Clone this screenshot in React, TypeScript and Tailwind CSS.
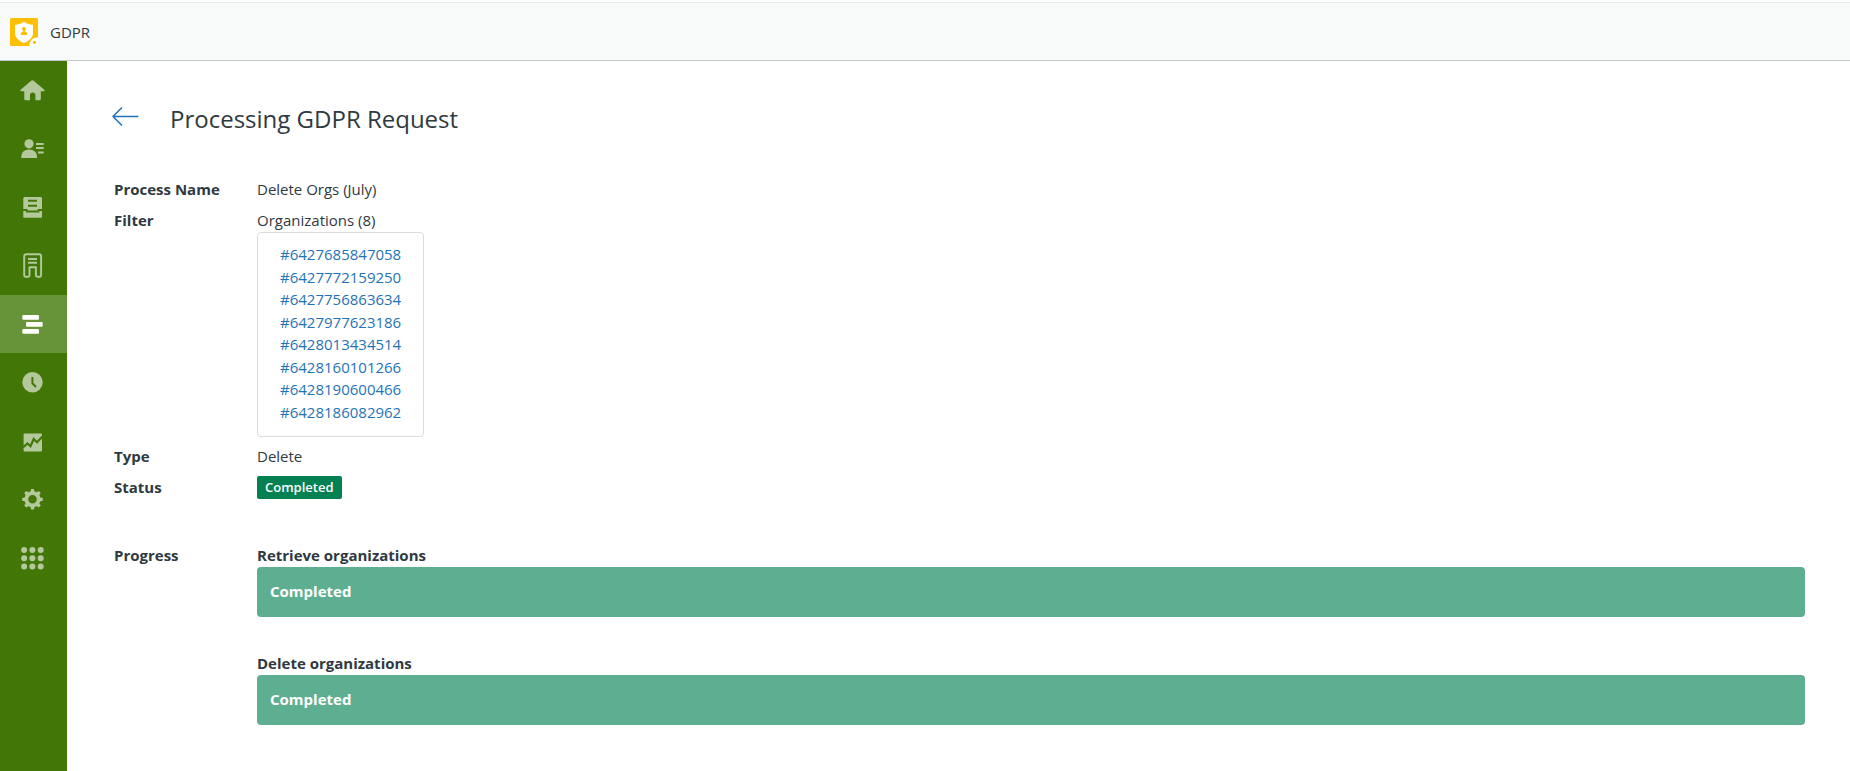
import type { ReactNode } from "react";
import clsx from "clsx";

const organizations = [
    "6427685847058",
    "6427772159250",
    "6427756863634",
    "6427977623186",
    "6428013434514",
    "6428160101266",
    "6428190600466",
    "6428186082962",
];

const progress = ["Retrieve organizations", "Delete organizations"];

const gearTeeth = [0, 45, 90, 135, 180, 225, 270, 315];
const dots = [5, 13.3, 21.6];

const navItems: { label: string; icon: ReactNode; active?: boolean }[] = [
    {
        label: "Home",
        icon: <path d="M11.5 3.6a1.4 1.4 0 0 1 1.8 0l11 9.2c.7.7.4 1.5-.5 1.5h-3v7.8c0 .7-.5 1.2-1.2 1.2h-4.2v-5a2.6 2.6 0 0 0-5.4 0v5H5.6c-.8 0-1.3-.5-1.3-1.2v-7.8H1.1c-.9 0-1.2-.8-.5-1.5z" />,
    },
    {
        label: "Customers",
        icon: (
            <>
                <circle cx="9" cy="7.8" r="4.6" />
                <path d="M1.3 22v-1c0-4.6 3-7.5 7.8-7.5s7.9 2.9 7.9 7.5v1z" />
                <path d="M16 7h7.7v2H16zM16 11h7.7v2H16zM18 15.5h5.7v2H18z" />
            </>
        ),
    },
    {
        label: "Views",
        icon: (
            <>
                <path fillRule="evenodd" d="M5 3h15.3c1 0 1.7.7 1.7 1.7V15h-4.3v1.6H7.6V15H3.3V4.7C3.3 3.7 4 3 5 3zm3 2.8v2h9v-2zm0 5v2h9v-2z" />
                <path d="M3.3 17h2.6v1.6h13.5V17H22v5.4c0 .8-.5 1.3-1.3 1.3H4.6c-.8 0-1.3-.5-1.3-1.3z" />
            </>
        ),
    },
    {
        label: "Organizations",
        icon: (
            <path
                d="M6.2 1.200h12.900a2 2 0 0 1 2 2v19.300a1.200 1.200 0 0 1-1.200 1.200h-2.800a1.200 1.200 0 0 1-1.200-1.200v-8.300h-6.400v8.300a1.200 1.200 0 0 1-1.200 1.200H5.400a1.200 1.200 0 0 1-1.200-1.200V3.200a2 2 0 0 1 2-2zM8 6h9M8 9.700h9"
                fill="none"
                stroke="currentColor"
                strokeWidth="1.9"
                strokeLinejoin="round"
            />
        ),
    },
    {
        label: "GDPR",
        active: true,
        icon: (
            <>
                <rect x="2.3" y="4" width="16.7" height="4.8" rx="1" />
                <rect x="6" y="11" width="16.7" height="4.8" rx="1" />
                <rect x="2.3" y="18" width="16.7" height="4.8" rx="1" />
            </>
        ),
    },
    {
        label: "Time",
        icon: (
            <>
                <circle cx="12.5" cy="13.2" r="10.2" />
                <path d="M12.4 8v6.3l3.6 3.7" fill="none" className="stroke-[#427707]" strokeWidth="2" />
            </>
        ),
    },
    {
        label: "Reporting",
        icon: (
            <>
                <rect x="3.6" y="5.4" width="18.4" height="18.2" rx="1" />
                <path d="M3 19.3 7.5 15.5l3 2.7 3.2-7.2 3.2 3.2 5.6-5.6" fill="none" className="stroke-[#427707]" strokeWidth="2.2" />
            </>
        ),
    },
    {
        label: "Admin",
        icon: (
            <>
                <circle cx="12.5" cy="13.3" r="6.2" fill="none" stroke="currentColor" strokeWidth="3.8" />
                {gearTeeth.map((angle) => (
                    <path key={angle} d="M10.4 6.3l.7-3.3h2.8l.7 3.3z" transform={`rotate(${angle} 12.5 13.3)`} />
                ))}
            </>
        ),
    },
    {
        label: "Apps",
        icon: dots.map((y) => dots.map((x) => <circle key={`${x}-${y}`} cx={x - 0.9} cy={y} r="3" />)),
    },
];

const Logo = () => (
    <svg width="28" height="28" viewBox="0 0 28 28" aria-hidden="true">
        <rect width="28" height="28" rx="1.5" fill="#fcc000" />
        <path d="M14 3.8c2.8 1.9 5.6 2.8 9 3v8.4c0 4.5-4.3 7.8-9 10-4.7-2.2-9-5.5-9-10V6.8c3.4-.2 6.2-1.100 9-3z" fill="#fff" />
        <circle cx="14" cy="11" r="2" fill="#fcc000" />
        <path d="M13 12h2v2h1.300l.9 1v2h-6.400v-2l.9-1H13z" fill="#fcc000" />
        <path d="M19 28c0-5 3.500-9 9-9v9z" fill="#fff" stroke="#fcc000" strokeWidth=".6" />
        <path d="M20 28c0-4.500 3.300-8.200 8-8.200V28z" fill="#fff" />
        <circle cx="24.5" cy="24.4" r="1.6" fill="#fcc000" />
    </svg>
);

const Header = () => (
    <div className="border-b border-[#c2c8cc] pt-0.5">
        <header className="flex h-[58px] items-center gap-3 border-t border-[#e9ebed] bg-[#f8f9f9] pl-[10px]">
            <Logo />
            <span className="text-[15px] leading-5">GDPR</span>
        </header>
    </div>
);

const Sidebar = () => (
    <aside className="w-[67px] shrink-0 bg-[#427707]">
        <nav className="flex h-[526px] flex-col">
            {navItems.map(({ label, icon, active }) => (
                <a
                    key={label}
                    href="#"
                    aria-label={label}
                    className={clsx("flex flex-1 items-center pl-5", active ? "bg-[#689439] text-white" : "text-[#b3c99c]")}
                >
                    <svg width="26" height="26" viewBox="0 0 26 26" fill="currentColor" aria-hidden="true">
                        {icon}
                    </svg>
                </a>
            ))}
        </nav>
    </aside>
);

const Row = ({ label, children }: { label: string; children: ReactNode }) => (
    <div className="flex">
        <dt className="w-[143px] shrink-0 font-bold">{label}</dt>
        <dd className="min-w-0 flex-1">{children}</dd>
    </div>
);

export default function App() {
    return (
        <div className="flex min-h-screen flex-col bg-white font-['Open_Sans','Noto_Sans',sans-serif] text-[#2f3941]">
            <Header />
            <div className="flex flex-1">
                <Sidebar />
                <main className="min-w-0 flex-1 pb-10 pl-[47px] pr-[45px] pt-10 text-[15px] leading-[23px]">
                    <div className="flex items-center">
                        <a href="#" aria-label="Back" className="w-14 pb-1 text-[#1f73b7]">
                            <svg width="28" height="20" viewBox="0 0 28 20" fill="none" stroke="currentColor" strokeWidth="1.5" className="-ml-0.5" aria-hidden="true">
                                <path d="M26.3 9.5H1.2M10 .5l-9 9 9 9" strokeLinejoin="round" />
                            </svg>
                        </a>
                        <h1 className="text-2xl leading-9">Processing GDPR Request</h1>
                    </div>

                    <dl className="mt-[41px] flex flex-col gap-2">
                        <Row label="Process Name">Delete Orgs (July)</Row>
                        <Row label="Filter">
                            <p>Organizations (8)</p>
                            <div className="w-fit rounded border border-[#d8dcde] px-[22px] pb-[13px] pt-[10px]">
                                <ul className="grid h-[180px] auto-rows-fr">
                                    {organizations.map((id) => (
                                        <li key={id} className="flex items-center">
                                            <a href="#" className="leading-5 text-[#1f73b7]">#{id}</a>
                                        </li>
                                    ))}
                                </ul>
                            </div>
                        </Row>
                        <Row label="Type">Delete</Row>
                        <Row label="Status">
                            <span className="block w-fit rounded-xs bg-[#038153] px-2 text-[13px] font-semibold text-white">Completed</span>
                        </Row>
                    </dl>

                    <dl className="mt-[45px]">
                        <Row label="Progress">
                            <div className="flex flex-col gap-[35px]">
                                {progress.map((step) => (
                                    <section key={step}>
                                        <h2 className="font-bold">{step}</h2>
                                        <div className="flex h-[50px] items-center rounded bg-[#5eae91] px-[13px] pb-0.5 font-bold text-white">Completed</div>
                                    </section>
                                ))}
                            </div>
                        </Row>
                    </dl>
                </main>
            </div>
        </div>
    );
}
